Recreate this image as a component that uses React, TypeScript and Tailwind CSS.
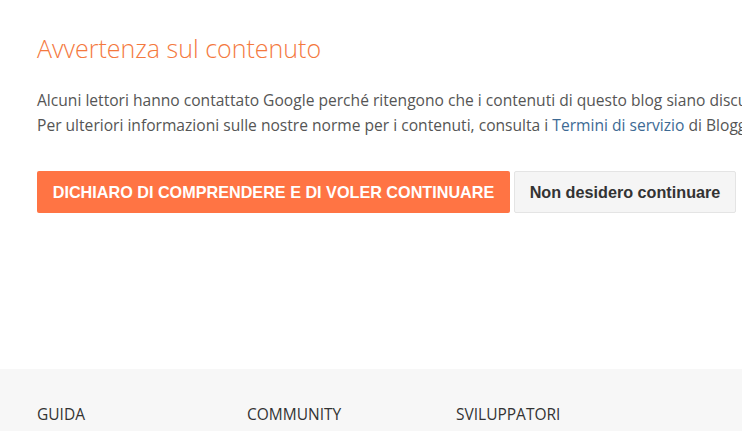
export default function App() {
  return (
    <div className="min-h-screen bg-white overflow-hidden font-['Open_Sans',sans-serif]">
      <div className="h-[369px] pl-[37px] pt-[31px]">
        <h1 className="text-[25px] font-light leading-[34px] text-[#f4793e] whitespace-nowrap">
          Avvertenza sul contenuto
        </h1>
        <p className="mt-[23px] text-[15.6px] leading-[25px] text-[#555] whitespace-nowrap">
          Alcuni lettori hanno contattato Google perché ritengono che i contenuti di questo blog siano discutibili.
          <br />
          Per ulteriori informazioni sulle nostre norme per i contenuti, consulta i{" "}
          <a className="text-[#3d6a94]" href="#">Termini di servizio</a> di Blogger.
        </p>
        <div className="mt-[33px] flex gap-[4px] font-['Liberation_Sans',Arial,sans-serif]">
          <button className="h-[42px] w-[473px] shrink-0 rounded-[2px] bg-[#ff7444] text-[16.2px] font-bold text-white">
            DICHIARO DI COMPRENDERE E DI VOLER CONTINUARE
          </button>
          <button className="h-[42px] w-[222px] shrink-0 rounded-[2px] border border-[#e4e4e4] bg-[#f5f5f5] text-[16.2px] font-bold text-[#333]">
            Non desidero continuare
          </button>
        </div>
      </div>
      <footer className="bg-[#f7f7f7] pl-[37px] pt-[34px] pb-10">
        <div className="flex text-[15.5px] text-[#333] uppercase">
          <div className="w-[210px]">Guida</div>
          <div className="w-[209px]">Community</div>
          <div className="w-[210px]">Sviluppatori</div>
        </div>
      </footer>
    </div>
  );
}
